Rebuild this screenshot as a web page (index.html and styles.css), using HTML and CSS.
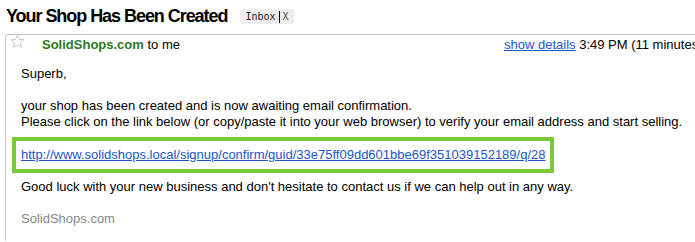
FILE: index.html
```html
<!DOCTYPE html>
<html>
<head>
<meta charset="utf-8">
<link rel="stylesheet" href="styles.css">
</head>
<body>
<div class="subject">
  <h1 class="title">Your Shop Has Been Created</h1>
  <span class="label">Inbox<span class="sep"></span><span class="x">X</span></span>
</div>
<div class="card">
  <div class="head">
    <svg class="star" width="15" height="15" viewBox="0 0 15 15"><path d="M7.5 1 L9.3 5.4 L14 5.7 L10.4 8.7 L11.6 13.4 L7.5 10.8 L3.4 13.4 L4.6 8.7 L1 5.7 L5.7 5.4 Z" fill="#fff" stroke="#c8c8c8" stroke-width="1" stroke-linejoin="round"/></svg>
    <span class="sender">SolidShops.com</span><span class="tome">&nbsp;to me</span>
    <span class="meta"><a class="details" href="#">show details</a> 3:49 PM (11 minutes ago)</span>
  </div>
  <div class="body">
    <p>Superb,</p>
    <p class="main">your shop has been created and is now awaiting email confirmation.<br>Please click on the link below (or copy/paste it into your web browser) to verify your email address and start selling.</p>
    <div class="linkbox"><a href="#">http://www.solidshops.local/signup/confirm/guid/33e75ff09dd601bbe69f351039152189/q/28</a></div>
    <p class="luck">Good luck with your new business and don't hesitate to contact us if we can help out in any way.</p>
    <p class="sig">SolidShops.com</p>
  </div>
</div>
</body>
</html>
```
FILE: styles.css
```css
html, body {
  margin: 0;
  padding: 0;
  background: #fff;
  overflow: hidden;
}
body {
  width: 695px;
  height: 242px;
  font-family: "Liberation Sans", Arial, sans-serif;
  color: #000;
  font-size: 13px;
}
.subject {
  display: flex;
  align-items: center;
  box-sizing: border-box;
  height: 34px;
  padding: 5px 0 7px 6px;
}
.title {
  margin: 0;
  font-size: 18px;
  letter-spacing: -1.05px;
  font-weight: bold;
  line-height: 22px;
  white-space: nowrap;
}
.label {
  margin-left: 13px;
  background: #eee;
  border-radius: 2px;
  padding: 1px 5px 0 5px;
  height: 15px;
  box-sizing: border-box;
  font-family: "DejaVu Sans Mono", monospace;
  font-size: 10px;
  line-height: 14px;
  color: #222;
  display: inline-flex;
  align-items: center;
}
.sep {
  display: inline-block;
  width: 1px;
  height: 12px;
  background: #000;
  margin: 0 3px 0 3px;
}
.x { color: #555; }
.card {
  margin-left: 5px;
  border-top: 1px solid #c3c3c3;
  border-left: 1px solid #c3c3c3;
  border-top-left-radius: 4px;
  width: 720px;
  height: 207px;
  box-sizing: border-box;
}
.head {
  position: relative;
  height: 18px;
  padding-top: 2px;
  box-sizing: border-box;
  display: flex;
  align-items: flex-start;
  white-space: nowrap;
  line-height: 16px;
}
.star {
  margin: -3px 0 0 4px;
}
.sender {
  margin-left: 17px;
  font-weight: bold;
  color: #2a7a22;
}
.meta {
  position: absolute;
  left: 498px;
  top: 2px;
}
.details { color: #2255cc; text-decoration: underline; }
.body {
  padding: 13px 0 0 15px;
  line-height: 16px;
}
.body p { margin: 0 0 16px 0; white-space: nowrap; }
.body p.main { margin-bottom: 7px; }
.linkbox {
  margin: 0 0 0 -9px;
  width: 524px;
  border: 4px solid #7cc83d;
  padding: 6px 5px 6px 5px;
  line-height: 16px;
  white-space: nowrap;
}
.linkbox a { color: #2255cc; }
.body p.luck { margin-top: 6px; margin-bottom: 16px; }
.sig { color: #888; margin: 0; }
```
